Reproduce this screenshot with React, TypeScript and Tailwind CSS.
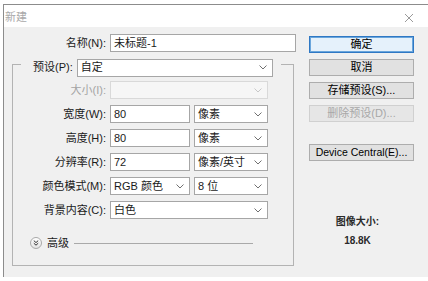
import React from "react";

const font = { fontFamily: '"Liberation Sans", "Noto Sans CJK SC", sans-serif' };

function Chevron({ light }: { light?: boolean }) {
  return (
    <svg width="8" height="5" viewBox="0 0 8 5" className="shrink-0">
      <path d="M0.5 0.5 L4 4 L7.5 0.5" fill="none" stroke={light ? "#c8c8c8" : "#707070"} strokeWidth="1" />
    </svg>
  );
}

function Select({ value, w, disabled }: { value?: string; w: string; disabled?: boolean }) {
  return (
    <div
      className={`${w} h-[18px] flex items-center justify-between pl-[3px] pr-[5px] border ${
        disabled ? "border-[#d9d9d9] bg-[#f6f6f6]" : "border-[#a6a6a6] bg-white"
      }`}
    >
      <span className="leading-none">{value}</span>
      <Chevron light={disabled} />
    </div>
  );
}

function Input({ value, w }: { value: string; w: string }) {
  return (
    <div className={`${w} h-[18px] flex items-center pl-[3px] border border-[#a6a6a6] bg-white`}>
      <span className="leading-none">{value}</span>
    </div>
  );
}

function Row({ label, disabled, children }: { label: string; disabled?: boolean; children: React.ReactNode }) {
  return (
    <div className="flex items-center h-[18px]">
      <div className={`w-[93px] text-right leading-none ${disabled ? "text-[#a3a3a3]" : ""}`}>{label}</div>
      <div className="ml-[4px] flex items-center gap-[4px]">{children}</div>
    </div>
  );
}

function Btn({ label, primary, disabled, className = "" }: { label: string; primary?: boolean; disabled?: boolean; className?: string }) {
  let tone = "border-[#adadad] bg-[#e1e1e1] text-black";
  if (primary) tone = "border-[#2f78c4] bg-[#e5f1fb] text-black shadow-[inset_0_0_0_1px_#6aa6dc]";
  if (disabled) tone = "border-[#d0d0d0] bg-[#e6e6e6] text-[#a8a8a8]";
  return (
    <div className={`w-[105px] h-[17px] flex items-center justify-center border leading-none ${tone} ${className}`}>
      {label}
    </div>
  );
}

export default function App() {
  return (
    <div className="w-[428px] h-[281px] bg-white overflow-hidden text-[11px] text-[#1a1a1a]" style={font}>
      <div className="ml-[3px] mt-[4px] w-[425px] h-[273px] border-l border-t border-[#8c8c8c] flex flex-col">
        {/* title bar */}
        <div className="h-[22px] bg-white flex items-center justify-between pl-[1px] pr-[15px]">
          <span className="text-[#a9a9a9] leading-none mt-[2px]">新建</span>
          <svg width="8" height="8" viewBox="0 0 8 8" className="mt-[3px]">
            <path d="M0 0 L8 8 M8 0 L0 8" stroke="#8e8e8e" strokeWidth="0.9" />
          </svg>
        </div>

        {/* body */}
        <div className="flex-1 bg-[#f0f0f0] flex">
          <div className="w-[292px] flex flex-col">
            <div className="mt-[7px] flex items-center h-[18px]">
              <div className="w-[102px] text-right leading-none">名称(N):</div>
              <div className="ml-[4px]">
                <Input value="未标题-1" w="w-[186px]" />
              </div>
            </div>

            <fieldset className="ml-[8px] mt-[6px] w-[282px] h-[208px] border border-[#b3b3b3]">
              <legend className="ml-[8px] h-[12px]">
                <div className="flex items-center h-[19px] pl-[12px] pr-[8px]">
                  <span className="leading-none">预设(P):</span>
                  <div className="ml-[4px]">
                    <Select value="自定" w="w-[196px]" />
                  </div>
                </div>
              </legend>

              <div className="mt-[11px] flex flex-col gap-[6px]">
                <Row label="大小(I):" disabled>
                  <Select w="w-[158px]" disabled />
                </Row>
                <Row label="宽度(W):">
                  <Input value="80" w="w-[80px]" />
                  <Select value="像素" w="w-[74px]" />
                </Row>
                <Row label="高度(H):">
                  <Input value="80" w="w-[80px]" />
                  <Select value="像素" w="w-[74px]" />
                </Row>
                <Row label="分辨率(R):">
                  <Input value="72" w="w-[80px]" />
                  <Select value="像素/英寸" w="w-[74px]" />
                </Row>
                <Row label="颜色模式(M):">
                  <Select value="RGB 颜色" w="w-[80px]" />
                  <Select value="8 位" w="w-[74px]" />
                </Row>
                <Row label="背景内容(C):">
                  <Select value="白色" w="w-[158px]" />
                </Row>
              </div>

              <div className="mt-[18px] flex items-center h-[12px] pl-[17px]">
                <div className="w-[12px] h-[12px] rounded-full border border-[#a9a9a9] bg-gradient-to-b from-white to-[#e4e4e4] flex items-center justify-center">
                  <svg width="6" height="6" viewBox="0 0 6 6">
                    <path d="M0.8 0.6 L3 2.6 L5.2 0.6 M0.8 3.2 L3 5.2 L5.2 3.2" fill="none" stroke="#333" strokeWidth="1" />
                  </svg>
                </div>
                <span className="ml-[5px] leading-none">高级</span>
                <div className="ml-[5px] w-[179px] border-t border-[#a9a9a9]" />
              </div>
            </fieldset>
          </div>

          <div className="ml-[13px] pt-[9px] flex flex-col">
            <Btn label="确定" primary />
            <Btn label="取消" className="mt-[6px]" />
            <Btn label="存储预设(S)..." className="mt-[6px]" />
            <Btn label="删除预设(D)..." disabled className="mt-[6px]" />
            <Btn label="Device Central(E)..." className="mt-[22px] text-[10.5px]" />
            <div className="mt-[55px] w-[105px] pr-[8px] flex flex-col items-center text-[10px] font-semibold text-[#2a2a2a]">
              <span className="leading-[12px]">图像大小:</span>
              <span className="mt-[7px] leading-[12px]">18.8K</span>
            </div>
          </div>
        </div>
      </div>
    </div>
  );
}
